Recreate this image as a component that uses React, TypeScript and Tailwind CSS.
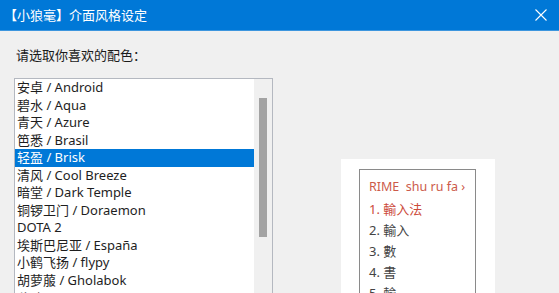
import React from "react";

const items = [
  "安卓 / Android",
  "碧水 / Aqua",
  "青天 / Azure",
  "笆悉 / Brasil",
  "轻盈 / Brisk",
  "清风 / Cool Breeze",
  "暗堂 / Dark Temple",
  "铜锣卫门 / Doraemon",
  "DOTA 2",
  "埃斯巴尼亚 / España",
  "小鹤飞扬 / flypy",
  "胡萝菔 / Gholabok",
  "谷歌 / Google",
];

const font = { fontFamily: '"Noto Sans", "Noto Sans CJK SC", sans-serif' };

export default function App() {
  return (
    <div className="w-[559px] h-[293px] overflow-hidden bg-[#f0f0f0] flex flex-col" style={font}>
      <div className="h-[31px] shrink-0 bg-[#0078d7] flex items-center justify-between pl-[4px] pr-[12px] border-b border-[#3d96de]">
        <span className="text-white text-[13px] leading-none">【小狼毫】介面风格设定</span>
        <svg width="12" height="12" viewBox="0 0 12 12" className="text-white">
          <path d="M0.5 0.5 L11.5 11.5 M11.5 0.5 L0.5 11.5" stroke="currentColor" strokeWidth="1.1" fill="none" />
        </svg>
      </div>
      <div className="flex flex-1 min-h-0">
        <div className="ml-[14px] w-[259px] flex flex-col">
          <div className="mt-[15px] h-[18px] text-[13px] leading-[18px] text-[#1a1a1a] pl-[2px]">请选取你喜欢的配色：</div>
          <div className="mt-[14px] flex-1 border border-[#b4b8c0] bg-white flex">
            <div className="flex-1 flex flex-col">
              {items.map((t, i) => (
                <div
                  key={t}
                  className={
                    i === 4
                      ? "h-[17.55px] shrink-0 leading-[17.55px] text-[13px] pl-[2px] bg-[#0078d7] text-white whitespace-nowrap"
                      : "h-[17.55px] shrink-0 leading-[17.55px] text-[13px] pl-[2px] text-[#1e1e1e] whitespace-nowrap"
                  }
                >
                  {t}
                </div>
              ))}
            </div>
            <div className="w-[18px] shrink-0 bg-[#f0f0f0] flex justify-center">
              <div className="mt-[19px] w-[8px] h-[139px] bg-[#a3a3a3]" />
            </div>
          </div>
        </div>
        <div className="ml-[68px] mt-[128px] w-[154px] bg-white pt-[10px] pl-[18px] flex flex-col">
          <div className="w-[117px] flex-1 border-t border-l border-r border-[#8a8a8a] pl-[9px] pt-[8px] flex flex-col">
            <div className="text-[12.5px] leading-[18px] text-[#cc5a4a] whitespace-nowrap">RIME&nbsp;&nbsp;shu ru fa ›</div>
            <div className="mt-[3px] flex flex-col text-[13px]">
              <div className="h-[21px] leading-[21px] text-[#cc4a3a]">1. 輸入法</div>
              <div className="h-[21px] leading-[21px] text-[#444]">2. 輸入</div>
              <div className="h-[21px] leading-[21px] text-[#444]">3. 數</div>
              <div className="h-[21px] leading-[21px] text-[#444]">4. 書</div>
              <div className="h-[21px] leading-[21px] text-[#444]">5. 輸</div>
            </div>
          </div>
        </div>
      </div>
    </div>
  );
}
